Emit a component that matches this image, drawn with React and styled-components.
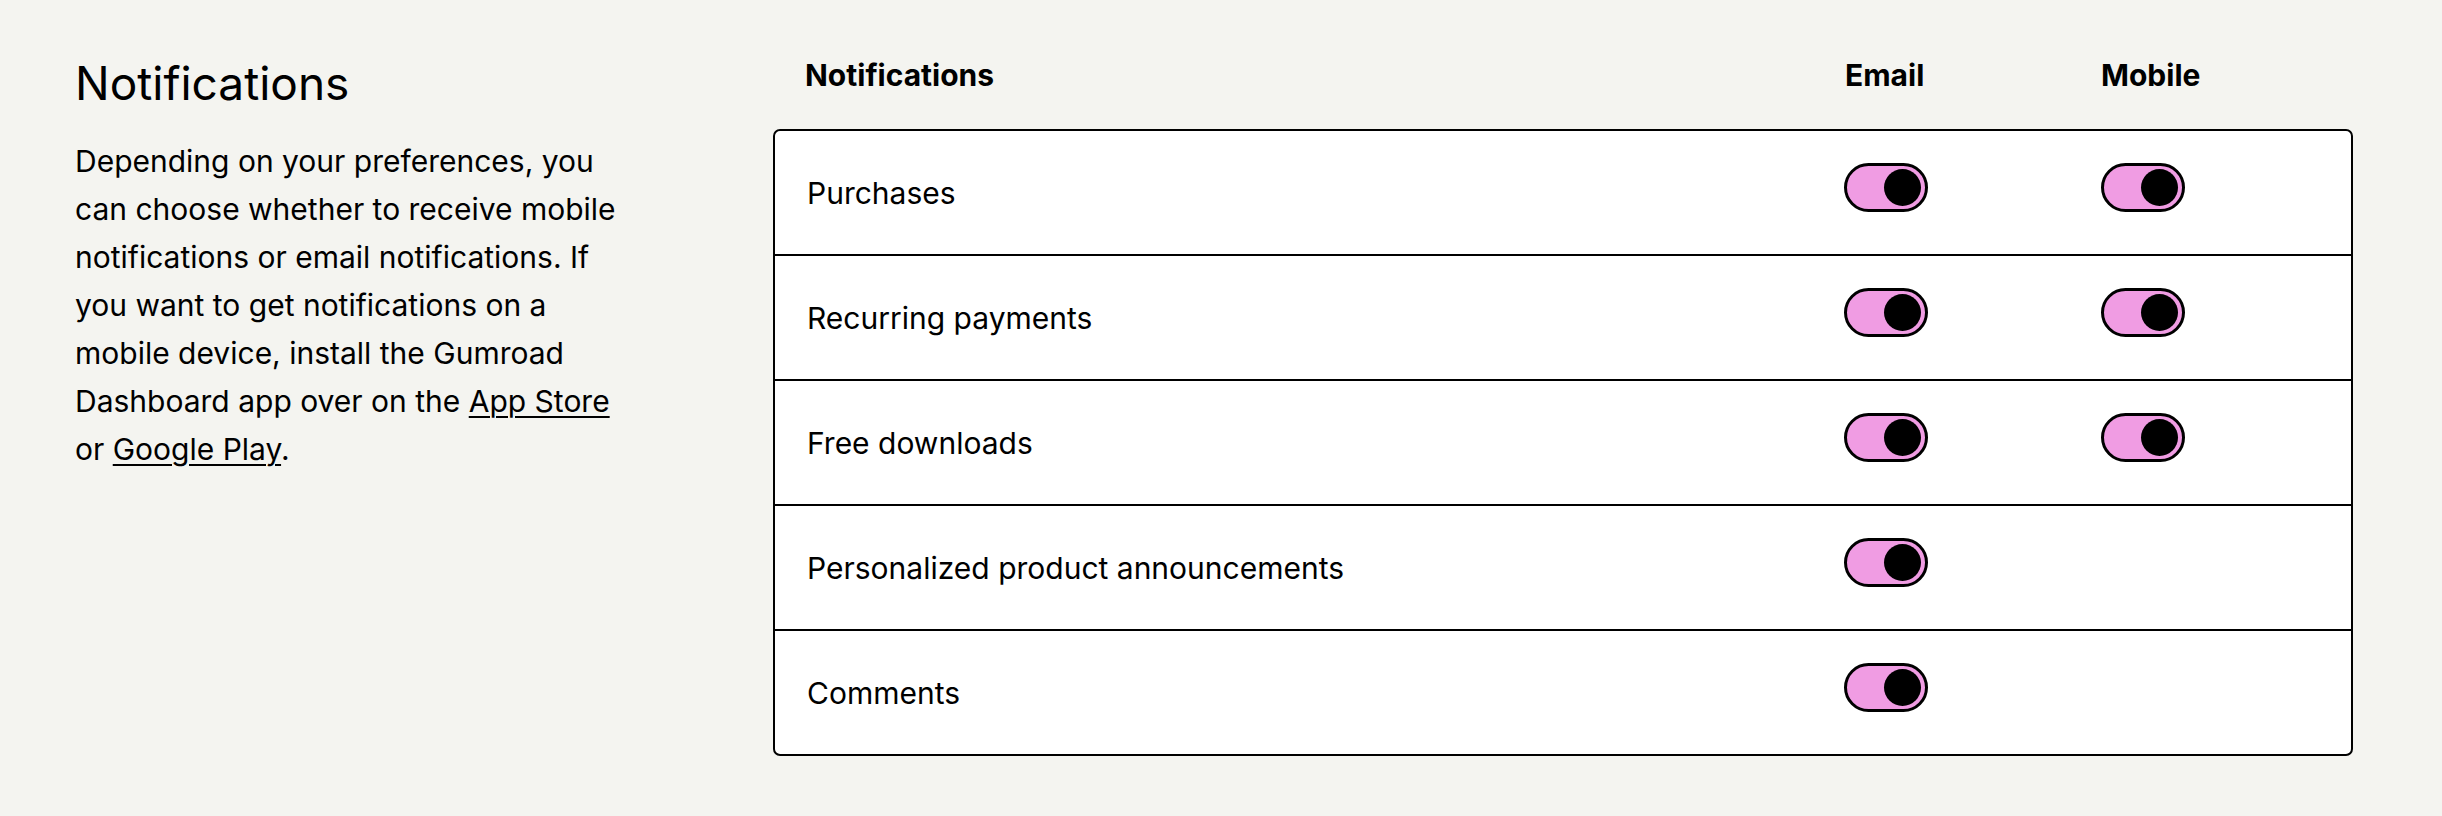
import React from 'react'
import styled, { createGlobalStyle } from 'styled-components'

const GlobalStyle = createGlobalStyle`
	html, body {
		margin: 0;
		background: #f4f4f0;
	}

	body {
		font-family: Inter, "Noto Sans", sans-serif;
		color: #000000;
	}
`

const Page = styled.section`
	display: grid;
	grid-template-columns: 570px 1fr;
	column-gap: 128px;
	padding: 51px 89px 60px 75px;
`

const Intro = styled.header`
	display: flex;
	flex-direction: column;
`

const Title = styled.h2`
	margin: 0;
	font-size: 46px;
	font-weight: 400;
	line-height: 64px;
`

const Description = styled.p`
	margin: 22px 0 0;
	font-size: 30px;
	line-height: 48px;
`

const Link = styled.a`
	color: inherit;
	text-decoration: underline;
	text-decoration-thickness: 2px;
	text-underline-offset: 4px;
`

const Table = styled.div`
	display: flex;
	flex-direction: column;
`

const HeadRow = styled.div`
	display: grid;
	grid-template-columns: minmax(0, 1fr) 256px 284px;
	padding-bottom: 30px;
`

const HeadCell = styled.div`
	padding: 0 32px;
	font-size: 30px;
	font-weight: 700;
	line-height: 48px;
`

const Card = styled.div`
	background: #ffffff;
	border: 2px solid #000000;
	border-radius: 7px;
	overflow: hidden;
`

const Row = styled.div`
	display: grid;
	grid-template-columns: minmax(0, 1fr) 257px 282px;

	& + & {
		border-top: 2px solid #000000;
	}
`

const Label = styled.div`
	padding: 38px 32px 37px;
	font-size: 30px;
	line-height: 48px;
`

const ToggleCell = styled.div`
	padding: 32px 32px 0;
`

const Toggle = styled.button`
	display: flex;
	align-items: center;
	justify-content: ${props => props.$on ? 'flex-end' : 'flex-start'};
	box-sizing: border-box;
	width: 84px;
	height: 49px;
	padding: 0 4px;
	border: 3px solid #000000;
	border-radius: 999px;
	background: ${props => props.$on ? '#f09ce3' : '#ffffff'};
	cursor: pointer;
`

const Knob = styled.span`
	width: 37px;
	height: 37px;
	border-radius: 50%;
	background: #000000;
`

const rows = [
	{label: 'Purchases', email: true, mobile: true},
	{label: 'Recurring payments', email: true, mobile: true},
	{label: 'Free downloads', email: true, mobile: true},
	{label: 'Personalized product announcements', email: true},
	{label: 'Comments', email: true},
]

function Switch({ checked, label }) {
	return (
		<Toggle type="button" role="switch" aria-checked={checked} aria-label={label} $on={checked}>
			<Knob />
		</Toggle>
	)
}

export default function App() {
	return (
		<>
			<GlobalStyle />
			<Page>
				<Intro>
					<Title>Notifications</Title>
					<Description>
						Depending on your preferences, you can choose whether to receive mobile notifications or
						email notifications. If you want to get notifications on a mobile device, install the
						Gumroad Dashboard app over on the <Link href="#">App Store</Link> or{' '}
						<Link href="#">Google Play</Link>.
					</Description>
				</Intro>

				<Table>
					<HeadRow>
						<HeadCell>Notifications</HeadCell>
						<HeadCell>Email</HeadCell>
						<HeadCell>Mobile</HeadCell>
					</HeadRow>

					<Card>
						{rows.map(row => (
							<Row key={row.label}>
								<Label>{row.label}</Label>
								<ToggleCell>
									{row.email !== undefined && <Switch checked={row.email} label={`${row.label} email`} />}
								</ToggleCell>
								<ToggleCell>
									{row.mobile !== undefined && <Switch checked={row.mobile} label={`${row.label} mobile`} />}
								</ToggleCell>
							</Row>
						))}
					</Card>
				</Table>
			</Page>
		</>
	)
}
